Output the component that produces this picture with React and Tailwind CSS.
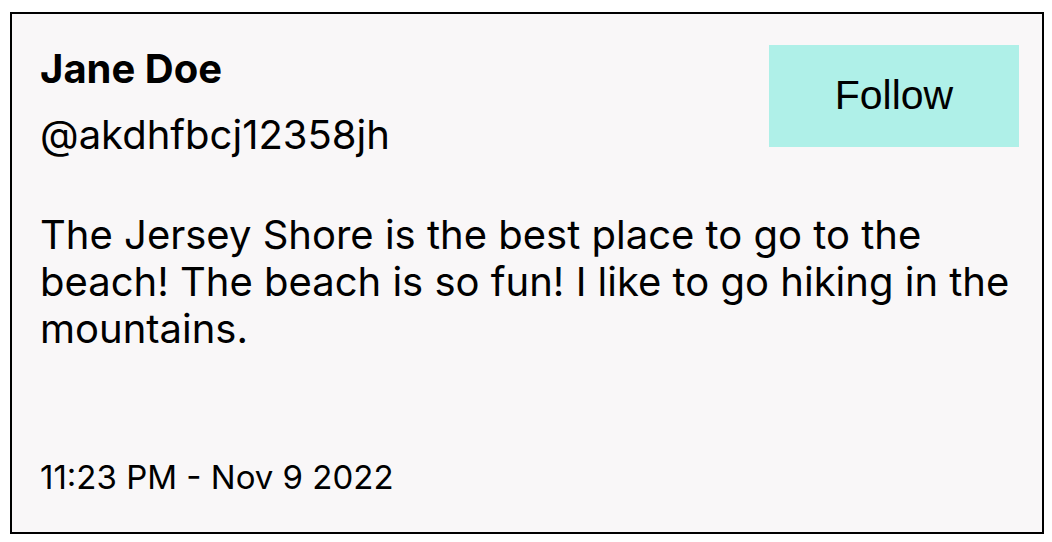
export default function App() {
  return (
    <div className="w-[1052px] h-[542px] bg-white pt-[12px] pl-[10px]">
      <div className="w-[1034px] h-[522px] border-2 border-black bg-[#f9f7f8] flex flex-col pl-[28px] pr-[23px] pt-[31px] pb-[35px] font-['Inter',sans-serif] text-black">
        <div className="flex justify-between items-start">
          <div>
            <div className="text-[40px] font-bold leading-[48px]">Jane Doe</div>
            <div className="text-[40px] leading-[48px] mt-[18px]">@akdhfbcj12358jh</div>
          </div>
          <button className="w-[250px] h-[102px] bg-[#aff0e8] font-['Liberation_Sans',Arial,sans-serif] text-[41px]">
            Follow
          </button>
        </div>
        <p className="text-[40px] leading-[47px] mt-[52px]">
          The Jersey Shore is the best place to go to the beach! The beach is so fun! I like to go hiking in the mountains.
        </p>
        <div className="mt-auto text-[33px] leading-[40px]">11:23 PM - Nov 9 2022</div>
      </div>
    </div>
  );
}
